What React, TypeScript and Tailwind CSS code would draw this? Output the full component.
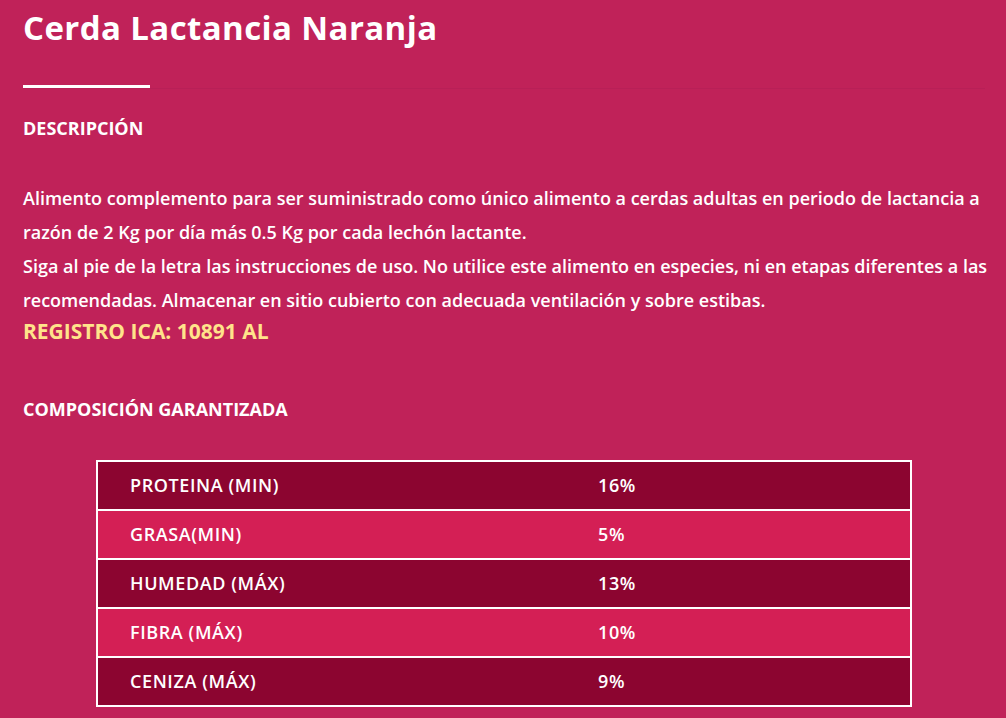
const ROWS = [
  { name: 'PROTEINA (MIN)', value: '16%' },
  { name: 'GRASA(MIN)', value: '5%' },
  { name: 'HUMEDAD (MÁX)', value: '13%' },
  { name: 'FIBRA (MÁX)', value: '10%' },
  { name: 'CENIZA (MÁX)', value: '9%' },
]

export default function App() {
  return (
    <div
      className="h-[718px] w-[1006px] overflow-hidden bg-[#c02259] text-white"
      style={{ fontFamily: '"Open Sans", "Liberation Sans", sans-serif' }}
    >
      <div className="pl-[23px] pr-[10px] pt-[8px]">
        <h1 className="text-[33px] font-bold leading-[40px] tracking-[0.4px]">Cerda Lactancia Naranja</h1>

        <div className="mt-[37px] mr-[11px] border-b border-[#b82057]">
          <div className="h-[3px] w-[127px] bg-white" />
        </div>

        <h2 className="mt-[27px] text-[18px] font-bold leading-[24px]">DESCRIPCIÓN</h2>

        <div className="mt-[41px] text-[18px] font-semibold leading-[34px]">
          <p>
            Alimento complemento para ser suministrado como único alimento a cerdas adultas en periodo
            de lactancia a razón de 2 Kg por día más 0.5 Kg por cada lechón lactante.
          </p>
          <p>
            Siga al pie de la letra las instrucciones de uso. No utilice este alimento en especies, ni
            en etapas diferentes a las recomendadas. Almacenar en sitio cubierto con adecuada
            ventilación y sobre estibas.
          </p>
        </div>
        <p className="text-[21px] font-bold leading-[28px] text-[#ffe38a]">REGISTRO ICA: 10891 AL</p>

        <h2 className="mt-[52px] text-[18px] font-bold leading-[24px]">COMPOSICIÓN GARANTIZADA</h2>

        <div className="mt-[39px] ml-[73px] w-[816px] border-2 border-white">
          {ROWS.map((row, i) => (
            <div
              key={row.name}
              className={[
                'flex items-center text-[18px] font-semibold tracking-[0.6px]',
                i % 2 === 0 ? 'bg-[#8c0530]' : 'bg-[#d41f55]',
                i > 0 ? 'h-[49px] border-t-2 border-white' : 'h-[47px]',
              ].join(' ')}
            >
              <div className="w-[468px] pl-[32px]">{row.name}</div>
              <div className="pl-[32px]">{row.value}</div>
            </div>
          ))}
        </div>
      </div>
    </div>
  )
}
